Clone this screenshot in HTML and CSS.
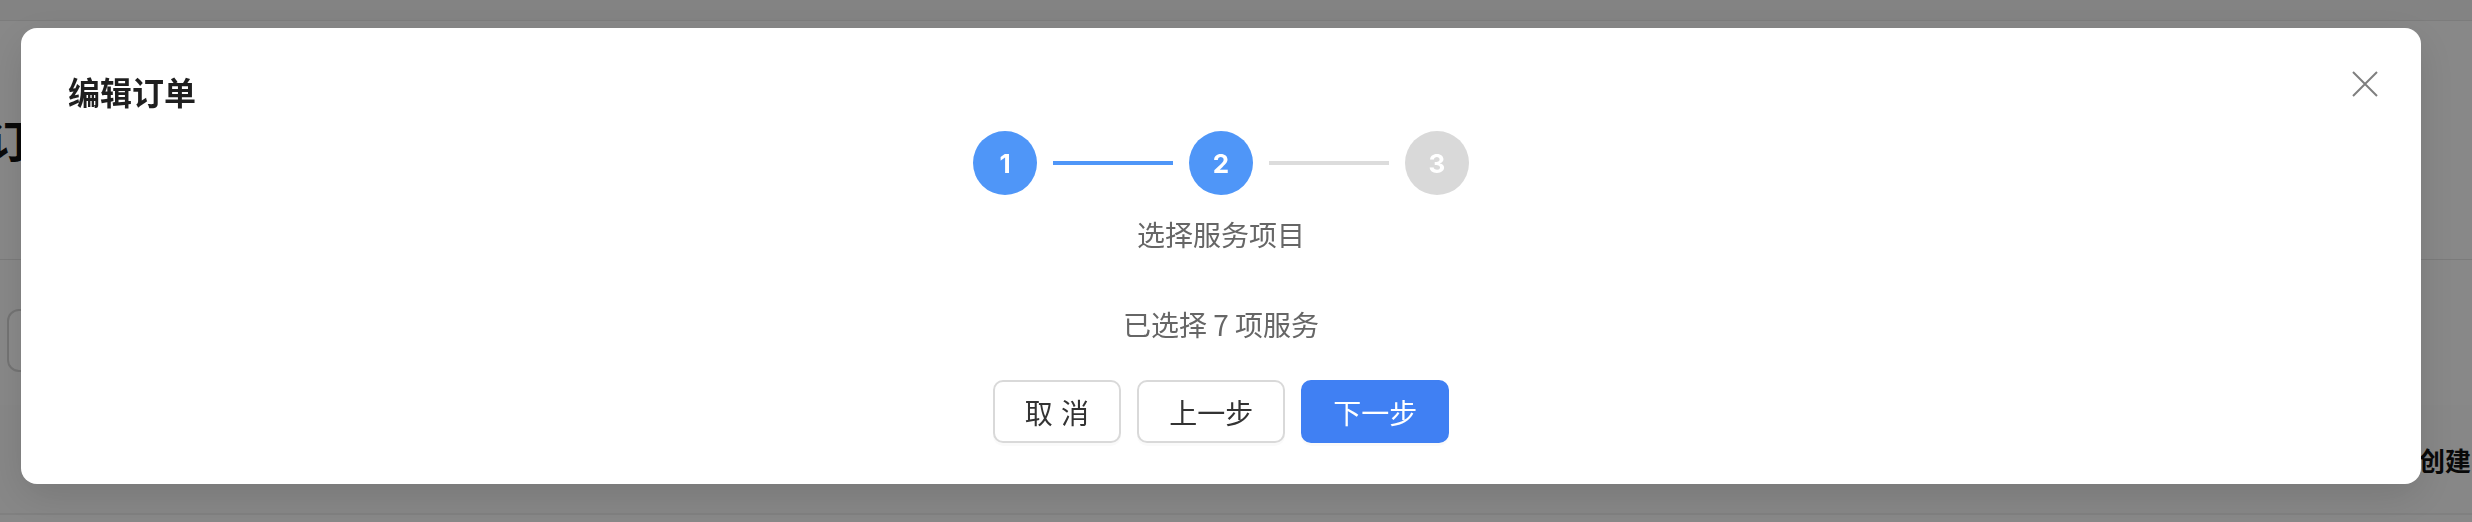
FILE: index.html
```html
<!DOCTYPE html>
<html lang="zh-CN">
<head>
<meta charset="utf-8">
<title>编辑订单</title>
<link rel="stylesheet" href="styles.css">
</head>
<body>
<div class="page">
  <div class="topbar"></div>
  <div class="page-head"><h1 class="page-title">订单管理</h1></div>
  <div class="filters"><div class="search"></div></div>
  <div class="table-head">
    <div class="th-spacer"></div>
    <div class="th-cell">创建时间</div>
  </div>
</div>

<div class="mask">
  <div class="modal">
    <div class="modal-header">
      <h2 class="modal-title">编辑订单</h2>
      <button class="modal-close" type="button" aria-label="关闭">
        <svg width="26" height="26" viewBox="0 0 26 26"><path d="M1 1L25 25M25 1L1 25" stroke="#7f7f7f" stroke-width="2" fill="none"/></svg>
      </button>
    </div>
    <div class="steps">
      <span class="step step-active">1</span>
      <span class="step-line step-line-active"></span>
      <span class="step step-active">2</span>
      <span class="step-line"></span>
      <span class="step">3</span>
    </div>
    <div class="step-label">选择服务项目</div>
    <div class="summary">已选择 7 项服务</div>
    <div class="footer">
      <button class="btn btn-cancel" type="button">取 消</button>
      <button class="btn" type="button">上一步</button>
      <button class="btn btn-primary" type="button">下一步</button>
    </div>
  </div>
</div>
</body>
</html>
```

FILE: styles.css
```css
* { box-sizing: border-box; margin: 0; padding: 0; }

body {
  width: 2472px;
  height: 522px;
  overflow: hidden;
  background: #fbfbfb;
  font-family: "Noto Sans CJK SC", "Noto Sans", sans-serif;
  color: #222;
}

/* background page (dimmed by mask) */
.page { width: 2472px; }

.topbar {
  height: 21px;
  background: #f2f2f2;
  border-bottom: 1px solid #e6e6e6;
}

.page-head {
  height: 239px;
  border-bottom: 1px solid #e3e3e3;
  padding-top: 88px;
}

.page-title {
  margin-left: -13px;
  font-size: 44px;
  line-height: 60px;
  font-weight: 700;
  color: #111;
  white-space: nowrap;
}

.filters {
  height: 145px;
  padding: 49px 0 0 7px;
}

.search {
  width: 400px;
  height: 63px;
  border: 2px solid #d6d6d6;
  border-radius: 12px;
  background: #fff;
}

.table-head {
  display: flex;
  height: 110px;
  background: #f9f9f9;
  border-bottom: 2px solid #ececec;
  align-items: center;
}

.th-spacer { flex: 0 0 2419px; }

.th-cell {
  font-size: 26px;
  font-weight: 700;
  color: #111;
  white-space: nowrap;
}

/* mask + modal */
.mask {
  position: fixed;
  inset: 0;
  background: rgba(0, 0, 0, 0.46);
  padding: 28px 0 0 21px;
}

.modal {
  width: 2400px;
  background: #fff;
  border-radius: 16px;
  box-shadow: 0 12px 40px rgba(0, 0, 0, 0.12);
  padding-bottom: 41px;
}

.modal-header {
  display: flex;
  justify-content: space-between;
  align-items: flex-start;
  padding: 41px 36px 0 47px;
}

.modal-title {
  font-size: 32px;
  line-height: 44px;
  font-weight: 700;
  color: #1f1f1f;
}

.modal-close {
  width: 40px;
  height: 40px;
  margin-top: -5px;
  border: 0;
  background: transparent;
  display: flex;
  align-items: center;
  justify-content: center;
}

.steps {
  display: flex;
  justify-content: center;
  align-items: center;
  margin-top: 18px;
}

.step {
  width: 64px;
  height: 64px;
  border-radius: 50%;
  background: #d9d9d9;
  color: #fff;
  display: flex;
  align-items: center;
  justify-content: center;
  font-family: Inter, "Noto Sans", sans-serif;
  font-size: 26px;
  font-weight: 700;
}

.step-active { background: #4f96f8; }

.step-line {
  width: 120px;
  height: 4px;
  margin: 0 16px;
  background: #dcdcdc;
}

.step-line-active { background: #4f96f8; }

.step-label {
  margin-top: 19px;
  text-align: center;
  font-size: 28px;
  line-height: 40px;
  color: #666;
}

.summary {
  margin-top: 50px;
  text-align: center;
  font-size: 28px;
  line-height: 40px;
  color: #666;
}

.footer {
  display: flex;
  justify-content: center;
  gap: 16px;
  margin-top: 36px;
}

.btn {
  height: 63px;
  padding: 0 30px;
  border: 2px solid #d9d9d9;
  border-radius: 10px;
  background: #fff;
  color: #333;
  font-family: "Noto Sans CJK SC", sans-serif;
  font-size: 28px;
  line-height: 1;
  box-shadow: 0 3px 0 rgba(0, 0, 0, 0.02);
}

.btn-cancel { word-spacing: 2px; }

.btn-primary {
  background: #4080f3;
  border-color: #4080f3;
  color: #fff;
}
```
